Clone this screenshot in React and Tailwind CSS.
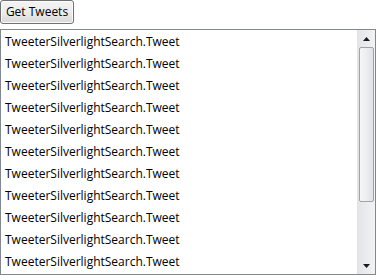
export default function App() {
  const rows = Array.from({ length: 11 });
  return (
    <div className="w-[376px] h-[276px] bg-white overflow-hidden" style={{ fontFamily: '"Open Sans", "Liberation Sans", sans-serif' }}>
      <div className="h-[29px] flex items-start">
        <button className="h-[24px] w-[74px] border border-[#707070] rounded-[3px] bg-gradient-to-b from-[#f4f4f4] via-[#ececec] to-[#d8d8d8] text-[12px] text-black leading-none flex items-center justify-center shadow-[inset_0_0_0_1px_#fcfcfc]">
          Get Tweets
        </button>
      </div>
      <div className="h-[246px] w-[376px] border border-[#828790] flex">
        <div className="flex-1 flex flex-col pt-[1px] overflow-hidden">
          {rows.map((_, i) => (
            <div key={i} className="h-[22px] shrink-0 pl-[4px] flex items-center text-[12px] text-black leading-none">
              TweeterSilverlightSearch.Tweet
            </div>
          ))}
        </div>
        <div className="w-[18px] flex flex-col bg-gradient-to-r from-[#e3e5e8] to-[#f2f3f5] border-l border-[#e0e2e6]">
          <div className="h-[17px] flex items-center justify-center">
            <svg width="7" height="4" viewBox="0 0 7 4"><path d="M3.5 0 L7 4 L0 4 Z" fill="#1a1a1a" /></svg>
          </div>
          <div className="h-[155px] mx-[1px] rounded-[2px] border border-[#9ca3ad] bg-gradient-to-r from-[#f5f6f7] via-[#eceef0] to-[#dfe2e6]"></div>
          <div className="flex-1"></div>
          <div className="h-[17px] flex items-center justify-center">
            <svg width="7" height="4" viewBox="0 0 7 4"><path d="M0 0 L7 0 L3.5 4 Z" fill="#1a1a1a" /></svg>
          </div>
        </div>
      </div>
    </div>
  );
}
